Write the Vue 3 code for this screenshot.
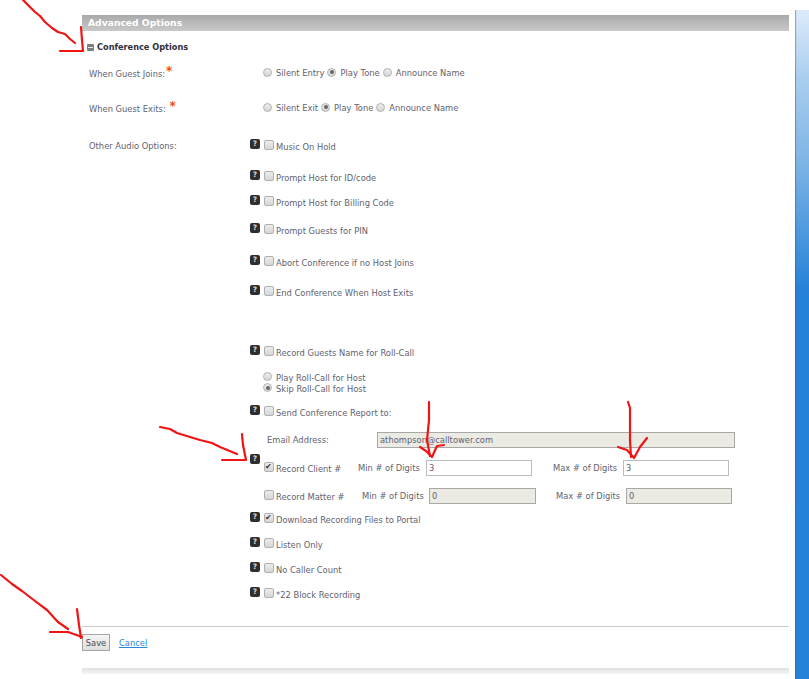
<script setup>
const audioRows = [
  { label: 'Music On Hold', h: 42 },
  { label: 'Prompt Host for ID/code', h: 20 },
  { label: 'Prompt Host for Billing Code', h: 30 },
  { label: 'Prompt Guests for PIN', h: 26 },
  { label: 'Abort Conference if no Host Joins', h: 38 },
  { label: 'End Conference When Host Exits', h: 22 }
]
const tailRows = [
  { label: 'Download Recording Files to Portal', h: 14, checked: true },
  { label: 'Listen Only', h: 36 },
  { label: 'No Caller Count', h: 14 },
  { label: '*22 Block Recording', h: 36 }
]
const strokes = [
  'M23 0L30 7L35 12L40 16L45 22L52 28L58 32L65 34L70 39L75 43',
  'M81 27L82 40L83 51L60 51',
  'M160 427L170 429L177 433L190 437L200 440L212 443L220 447L237 454',
  'M242 434L243 445L246 460L222 460',
  'M429 402L429 420L427 440L430 456',
  'M420 447L426 451L432 457L437 446L444 445',
  'M628 402L630 408L630 440L631 457',
  'M618 447L627 450L634 458L640 447L647 438',
  'M1 575L12 584L22 591L35 601L47 610L58 622L68 629',
  'M50 632L68 632L82 637',
  'M77 609L79 625L81 638'
]
const h = (n) => ({ height: n + 'px' })
</script>

<template>
  <div class="page">
    <main class="panel">
      <h2 class="bar">Advanced Options</h2>
      <h3 class="section"><span class="minus"></span>Conference Options</h3>

      <div class="row guest-joins">
        <div class="label">When Guest Joins:<span class="star">*</span></div>
        <div class="radios">
          <label><input type="radio" name="j" />Silent Entry</label>
          <label><input type="radio" name="j" checked />Play Tone</label>
          <label><input type="radio" name="j" />Announce Name</label>
        </div>
      </div>
      <div class="row guest-exits">
        <div class="label">When Guest Exits: <span class="star">*</span></div>
        <div class="radios">
          <label><input type="radio" name="e" />Silent Exit</label>
          <label><input type="radio" name="e" checked />Play Tone</label>
          <label><input type="radio" name="e" />Announce Name</label>
        </div>
      </div>

      <div v-for="(r, i) in audioRows" :key="r.label" class="row" :style="h(r.h)">
        <div class="label">{{ i === 0 ? 'Other Audio Options:' : '' }}</div>
        <span class="help">?</span>
        <label class="check"><input type="checkbox" />{{ r.label }}</label>
      </div>

      <div class="row roll-call">
        <div class="label"></div>
        <span class="help">?</span>
        <label class="check"><input type="checkbox" />Record Guests Name for Roll-Call</label>
      </div>
      <div class="row roll-options">
        <div class="label"></div>
        <div class="stack">
          <label><input type="radio" name="r" />Play Roll-Call for Host</label>
          <label><input type="radio" name="r" checked />Skip Roll-Call for Host</label>
        </div>
      </div>
      <div class="row send-report">
        <div class="label"></div>
        <span class="help">?</span>
        <label class="check"><input type="checkbox" />Send Conference Report to:</label>
      </div>
      <div class="row email">
        <div class="label"></div>
        <span class="email-label">Email Address:</span>
        <input class="field email-field" disabled value="athompson@calltower.com" />
      </div>
      <div class="row client">
        <div class="label"></div>
        <span class="help low">?</span>
        <label class="check fixed"><input type="checkbox" checked />Record Client #</label>
        <span class="min-label">Min # of Digits</span>
        <input class="field small" value="3" />
        <span class="max-label">Max # of Digits</span>
        <input class="field small" value="3" />
      </div>
      <div class="row matter">
        <div class="label"></div>
        <label class="check fixed no-help"><input type="checkbox" />Record Matter #</label>
        <span class="min-label">Min # of Digits</span>
        <input class="field small" disabled value="0" />
        <span class="max-label">Max # of Digits</span>
        <input class="field small" disabled value="0" />
      </div>
      <div v-for="r in tailRows" :key="r.label" class="row" :style="h(r.h)">
        <div class="label"></div>
        <span class="help">?</span>
        <label class="check"><input type="checkbox" :checked="r.checked" />{{ r.label }}</label>
      </div>

      <footer class="actions">
        <button class="save" type="button">Save</button>
        <a class="cancel" href="#">Cancel</a>
      </footer>
      <div class="end"></div>
    </main>
    <aside class="strip"></aside>

    <svg class="marks" width="809" height="679" viewBox="0 0 809 679" fill="none">
      <path v-for="d in strokes" :key="d" :d="d" stroke="#f01414" stroke-width="2.2" stroke-linejoin="round" stroke-linecap="round" />
    </svg>
  </div>
</template>

<style>
html, body { margin: 0; background: #fff; }
</style>

<style scoped>
.page {
  position: relative;
  display: flex;
  box-sizing: border-box;
  width: 809px;
  height: 679px;
  padding-left: 82px;
  overflow: hidden;
  background: #fff;
  font-family: "DejaVu Sans", Verdana, sans-serif;
  font-size: 8.35px;
  color: #62626e;
}
.panel { width: 707px; padding-top: 15px; flex: none; }
.bar {
  margin: 0;
  height: 16px;
  padding-left: 6px;
  background: linear-gradient(#a9a9a9, #c9c9c9);
  color: #fff;
  font-size: 9.2px;
  font-weight: 700;
  line-height: 16px;
}
.section {
  display: flex;
  align-items: center;
  margin: 8px 0 0;
  height: 16px;
  padding-left: 5px;
  color: #30303a;
  font-size: 8.2px;
  font-weight: 700;
}
.minus {
  position: relative;
  box-sizing: border-box;
  width: 7px;
  height: 7px;
  margin-right: 3px;
  border-radius: 1px;
  background: #7a7f7d;
}
.minus::after {
  content: "";
  position: absolute;
  left: 1px;
  right: 1px;
  top: 3px;
  height: 1px;
  background: #e8e8e8;
}
.row { display: flex; align-items: center; }
.guest-joins { height: 36px; }
.guest-exits { height: 34px; }
.roll-call { height: 28px; margin-top: 35px; }
.roll-options { height: 34px; }
.send-report { height: 24px; }
.email { height: 32px; }
.client { height: 24px; }
.matter { height: 32px; }
.label {
  flex: none;
  width: 169px;
  padding-left: 7px;
  box-sizing: border-box;
  white-space: pre;
}
.star {
  position: relative;
  top: -2px;
  margin-left: 1px;
  color: #f2480c;
  font-size: 12px;
  font-weight: 700;
  line-height: 1;
}
.radios {
  display: flex;
  gap: 3px;
  margin-left: 12px;
  white-space: pre;
}
.radios label, .stack label { display: flex; align-items: center; }
.stack { display: flex; flex-direction: column; margin-left: 12px; }
.stack label { height: 11px; }
input[type="radio"], input[type="checkbox"] {
  appearance: none;
  position: relative;
  flex: none;
  box-sizing: border-box;
  width: 9px;
  height: 9px;
  margin: 0 4px 2px 0;
  border: 1px solid #b0b0b0;
  background: linear-gradient(#ececec, #d6d6d6);
}
input[type="radio"] { border-radius: 50%; }
input[type="radio"]:checked::after {
  content: "";
  position: absolute;
  left: 1.5px;
  top: 1.5px;
  width: 4px;
  height: 4px;
  border-radius: 50%;
  background: #666;
}
input[type="checkbox"] {
  width: 10px;
  height: 10px;
  margin: 0 2px 4px 0;
  border-radius: 2px;
}
input[type="checkbox"]:checked::after {
  content: "✔";
  position: absolute;
  left: 0;
  top: -2px;
  color: #333;
  font-size: 8px;
  line-height: 11px;
}
.help {
  flex: none;
  width: 10px;
  height: 10px;
  margin: -5px 4px 0 -1px;
  border-radius: 2px;
  background: #2e2e2e;
  color: #ddd;
  font-size: 7.5px;
  font-weight: 700;
  line-height: 10px;
  text-align: center;
}
.help.low { margin-top: -18px; }
.check { display: flex; align-items: center; padding-top: 2px; white-space: pre; }
.check.fixed { width: 94px; flex: none; }
.check.no-help { margin-left: 13px; }
.email-label { width: 110px; margin-left: 16px; flex: none; }
.field {
  flex: none;
  box-sizing: border-box;
  height: 16px;
  padding: 0 2px;
  border: 1px solid #bbb;
  outline: 0;
  background: #fff;
  color: #62626e;
  font: inherit;
}
.field:disabled { border-color: #a8a8a8; background: #ebebe4; color: #62626e; }
.email-field { width: 358px; }
.small { width: 106px; }
.min-label { width: 68px; flex: none; }
.max-label { width: 70px; margin-left: 21px; flex: none; }
.matter .check.fixed { width: 98px; }
.matter .min-label { width: 67px; }
.matter .small:first-of-type { width: 107px; }
.matter .max-label { margin-left: 20px; }
.actions {
  display: flex;
  align-items: center;
  gap: 9px;
  margin-top: 14px;
  height: 32px;
  border-top: 1px solid #c9c9c9;
}
.save {
  box-sizing: border-box;
  width: 28px;
  height: 17px;
  margin-top: -1px;
  padding: 0;
  border: 1px solid #a5a5a5;
  background: linear-gradient(#f5f5f5, #dedede);
  color: #4a4a4a;
  font: inherit;
}
.cancel { color: #2b86d8; text-decoration: underline; }
.end {
  height: 6px;
  margin-top: 9px;
  background: linear-gradient(#dfe2df, #f5f5f5);
}
.strip {
  flex: none;
  width: 14px;
  margin: 10px 0 0 6px;
  background: linear-gradient(#dcebfa 0, #a9cdee 70px, #7fb5e6 150px, #2682d8 280px, #2482d8 100%);
  box-shadow: inset 2px 0 1px -1px rgba(70, 90, 120, .5);
}
.marks { position: absolute; left: 0; top: 0; pointer-events: none; }
</style>
